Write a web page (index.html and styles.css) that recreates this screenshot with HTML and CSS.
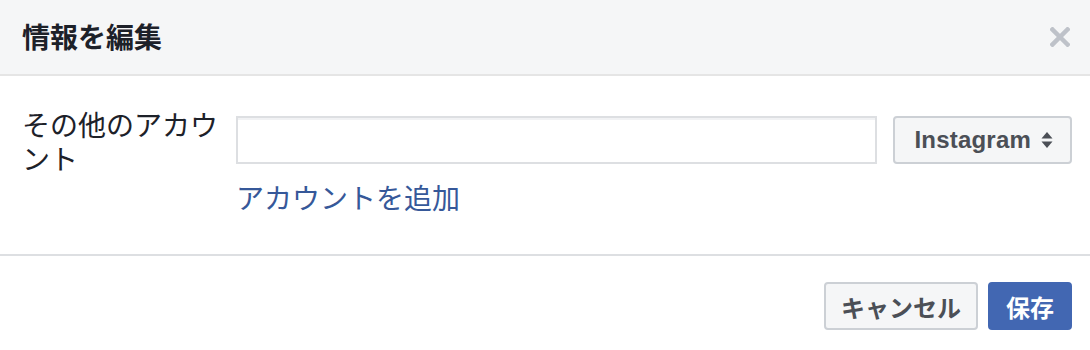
FILE: index.html
```html
<!DOCTYPE html>
<html lang="ja">

<head>
    <meta charset="UTF-8">
    <meta name="viewport" content="width=device-width, initial-scale=1.0">
    <title>情報を編集</title>
    <link rel="stylesheet" href="styles.css">
</head>

<body>
    <div class="dialog">
        <div class="dialog-header">
            <div class="dialog-title">情報を編集</div>
            <button class="dialog-close" aria-label="閉じる">
                <svg width="20" height="20" viewBox="0 0 20 20">
                    <path d="M2.5 2.5 L17.5 17.5 M17.5 2.5 L2.5 17.5" stroke="#bec2c9" stroke-width="4.5" stroke-linecap="square" fill="none"/>
                </svg>
            </button>
        </div>

        <div class="dialog-body">
            <div class="field-label">その他のアカウント</div>
            <div class="field-control">
                <div class="field-row">
                    <input class="text-input" type="text">
                    <div class="select-button">
                        <span>Instagram</span>
                        <svg width="12" height="18" viewBox="0 0 12 18">
                            <path d="M6 1 L11.5 7.5 L0.5 7.5 Z" fill="#4b4f56"/>
                            <path d="M6 17 L11.5 10.5 L0.5 10.5 Z" fill="#4b4f56"/>
                        </svg>
                    </div>
                </div>
                <a class="add-link" href="#">アカウントを追加</a>
            </div>
        </div>

        <div class="dialog-footer">
            <button class="btn">キャンセル</button>
            <button class="btn btn-primary">保存</button>
        </div>
    </div>
</body>

</html>
```

FILE: styles.css
```css
body {
    margin: 0;
    font-family: 'Liberation Sans', 'Noto Sans CJK JP', sans-serif;
    background-color: white;
    color: #1d2129;
}

.dialog {
    width: 1090px;
    height: 350px;
    background-color: white;
}

.dialog-header {
    display: flex;
    justify-content: space-between;
    align-items: center;
    height: 74px;
    padding: 0 20px 0 22px;
    background-color: #f5f6f7;
    border-bottom: 2px solid #e5e5e5;
}

.dialog-title {
    font-size: 28px;
    font-weight: bold;
    color: #1d2129;
    margin-top: -2px;
}

.dialog-close {
    border: none;
    background: none;
    padding: 0;
    display: flex;
    cursor: pointer;
    margin-top: -1px;
}

.dialog-body {
    display: grid;
    grid-template-columns: 200px 1fr;
    column-gap: 14px;
    padding: 34px 18px 37px 22px;
    border-bottom: 2px solid #dddfe2;
}

.field-label {
    font-size: 28px;
    line-height: 34px;
    color: #1d2129;
}

.field-control {
    display: flex;
    flex-direction: column;
    align-items: flex-start;
    padding-top: 6px;
}

.field-row {
    display: flex;
    gap: 16px;
    width: 100%;
}

.text-input {
    flex: 1;
    height: 48px;
    box-sizing: border-box;
    border: 2px solid #dddfe2;
    box-shadow: inset 0 2px 0 #f1f2f4;
    border-radius: 0;
    margin: 0;
    padding: 0 10px;
    font-size: 24px;
    font-family: inherit;
    outline: none;
}

.select-button {
    display: flex;
    align-items: center;
    gap: 10px;
    height: 48px;
    box-sizing: border-box;
    padding: 0 17px 0 19px;
    background-color: #f5f6f7;
    border: 2px solid #ccd0d5;
    border-radius: 4px;
    font-size: 24px;
    font-weight: bold;
    color: #4b4f56;
    letter-spacing: 0.2px;
}

.add-link {
    margin-top: 19px;
    font-size: 28px;
    line-height: 34px;
    color: #365899;
    text-decoration: none;
}

.dialog-footer {
    display: flex;
    justify-content: flex-end;
    gap: 10px;
    padding: 26px 18px 0 22px;
}

.btn {
    height: 48px;
    box-sizing: border-box;
    padding: 0 15px;
    font-family: inherit;
    font-size: 24px;
    font-weight: bold;
    color: #4b4f56;
    background-color: #f5f6f7;
    border: 2px solid #ccd0d5;
    border-radius: 4px;
    cursor: pointer;
}

.btn-primary {
    padding: 0 16px;
    color: white;
    background-color: #4267b2;
    border-color: #4267b2;
}
```
